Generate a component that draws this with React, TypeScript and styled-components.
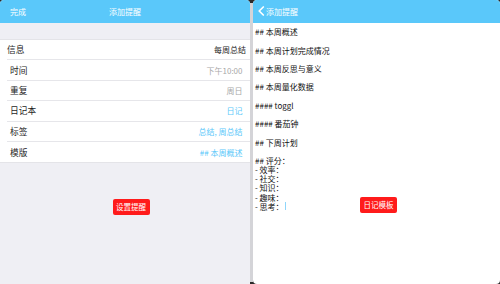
import React from 'react';
import styled, { createGlobalStyle } from 'styled-components';

const GlobalStyle = createGlobalStyle`
    html, body {
        margin: 0;
        padding: 0;
        background: #2a2a2a;
    }
    body {
        font-family: "Noto Sans CJK SC", "Noto Sans", "Liberation Sans", sans-serif;
    }
`;

const blue = '#5ac8fa';
const red = '#ff1b1b';

const Stage = styled.div`
    display: flex;
    width: 500px;
    height: 284px;
    background: #2a2a2a;
    overflow: hidden;
`;

const SettingsScreen = styled.div`
    width: 250px;
    flex: none;
    display: flex;
    flex-direction: column;
    background: #efeff4;
    border-radius: 4px 4px 0 0;
    overflow: hidden;
`;

const Divider = styled.div`
    width: 3px;
    flex: none;
    margin: 3px 0 2px;
    background: #d4d4d8;
`;

const EditorScreen = styled.div`
    flex: 1;
    position: relative;
    display: flex;
    flex-direction: column;
    background: #fff;
    border-radius: 4px;
    overflow: hidden;
`;

const NavBar = styled.div<{ $h: number }>`
    height: ${p => p.$h}px;
    flex: none;
    background: ${blue};
    color: #fff;
    font-size: 8px;
    display: flex;
    align-items: center;
`;

const CenterNav = styled(NavBar)`
    display: grid;
    grid-template-columns: 1fr auto 1fr;
    padding: 0 10px;
`;

const NavTitle = styled.span`
    text-align: center;
`;

const BackNav = styled(NavBar)`
    padding-left: 4px;
    gap: 1px;
`;

const Band = styled.div`
    height: 17px;
    flex: none;
`;

const List = styled.div`
    background: #fff;
    padding-left: 7px;
    border-top: 1px solid #e4e4e8;
    border-bottom: 1px solid #e4e4e8;
    margin-top: -1px;
`;

const Row = styled.div<{ $first?: boolean }>`
    box-sizing: border-box;
    height: 20.4px;
    display: flex;
    align-items: center;
    justify-content: space-between;
    padding: 0 ${p => (p.$first ? 4 : 7.5)}px 0 ${p => (p.$first ? 0 : 3)}px;
    border-bottom: 1px solid #e6e6ea;
    &:last-child {
        border-bottom: none;
    }
`;

const Label = styled.span`
    font-size: 8.7px;
    color: #1e1e1e;
`;

const Value = styled.span<{ $tone: 'dark' | 'muted' | 'link' }>`
    font-size: 8px;
    color: ${p => (p.$tone === 'dark' ? '#1e1e1e' : p.$tone === 'muted' ? '#a8a8a8' : blue)};
`;

const ButtonBar = styled.div`
    display: flex;
    justify-content: center;
    padding: 36px 0 0 12px;
`;

const RedButton = styled.div`
    background: ${red};
    color: #fff;
    font-size: 7.5px;
    line-height: 15.7px;
    padding: 0 3.5px;
    border-radius: 2px;
`;

const FloatingButton = styled(RedButton)`
    position: absolute;
    left: 107px;
    top: 197px;
`;

const Editor = styled.div`
    padding: 4.6px 0 0 2px;
    font-size: 8px;
    line-height: 9.2px;
    color: #111;
    white-space: pre;
`;

const Line = styled.div`
    height: 9.2px;
    display: flex;
    align-items: center;
`;

const Caret = styled.span`
    display: inline-block;
    width: 1.5px;
    height: 8px;
    margin-left: 1px;
    background: #8fd6fb;
`;

const rows: { label: string; value: string; tone: 'dark' | 'muted' | 'link' }[] = [
    { label: '信息', value: '每周总结', tone: 'dark' },
    { label: '时间', value: '下午10:00', tone: 'muted' },
    { label: '重复', value: '周日', tone: 'muted' },
    { label: '日记本', value: '日记', tone: 'link' },
    { label: '标签', value: '总结, 周总结', tone: 'link' },
    { label: '模版', value: '## 本周概述', tone: 'link' },
];

const template = [
    '## 本周概述',
    '',
    '## 本周计划完成情况',
    '',
    '## 本周反思与意义',
    '',
    '## 本周量化数据',
    '',
    '#### toggl',
    '',
    '#### 番茄钟',
    '',
    '## 下周计划',
    '',
    '## 评分：',
    '- 效率：',
    '- 社交：',
    '- 知识：',
    '- 趣味：',
    '- 思考：',
];

const Chevron = () => (
    <svg width="8" height="10" viewBox="0 0 8 10" aria-hidden="true">
        <path d="M6.3 1 L2.2 5 L6.3 9" fill="none" stroke="#fff" strokeWidth="1.7" strokeLinecap="round" strokeLinejoin="round" />
    </svg>
);

const App = () => {
    return (
        <>
            <GlobalStyle />
            <Stage>
                <SettingsScreen>
                    <CenterNav $h={23}>
                        <span>完成</span>
                        <NavTitle>添加提醒</NavTitle>
                        <span />
                    </CenterNav>
                    <Band />
                    <List>
                        {rows.map((r, i) => (
                            <Row key={r.label} $first={i === 0}>
                                <Label>{r.label}</Label>
                                <Value $tone={r.tone}>{r.value}</Value>
                            </Row>
                        ))}
                    </List>
                    <ButtonBar>
                        <RedButton>设置提醒</RedButton>
                    </ButtonBar>
                </SettingsScreen>
                <Divider />
                <EditorScreen>
                    <BackNav $h={22.7}>
                        <Chevron />
                        <span>添加提醒</span>
                    </BackNav>
                    <Editor>
                        {template.map((t, i) => (
                            <Line key={i}>
                                {t}
                                {i === template.length - 1 && <Caret />}
                            </Line>
                        ))}
                    </Editor>
                    <FloatingButton>日记模板</FloatingButton>
                </EditorScreen>
            </Stage>
        </>
    );
};

export default App;
